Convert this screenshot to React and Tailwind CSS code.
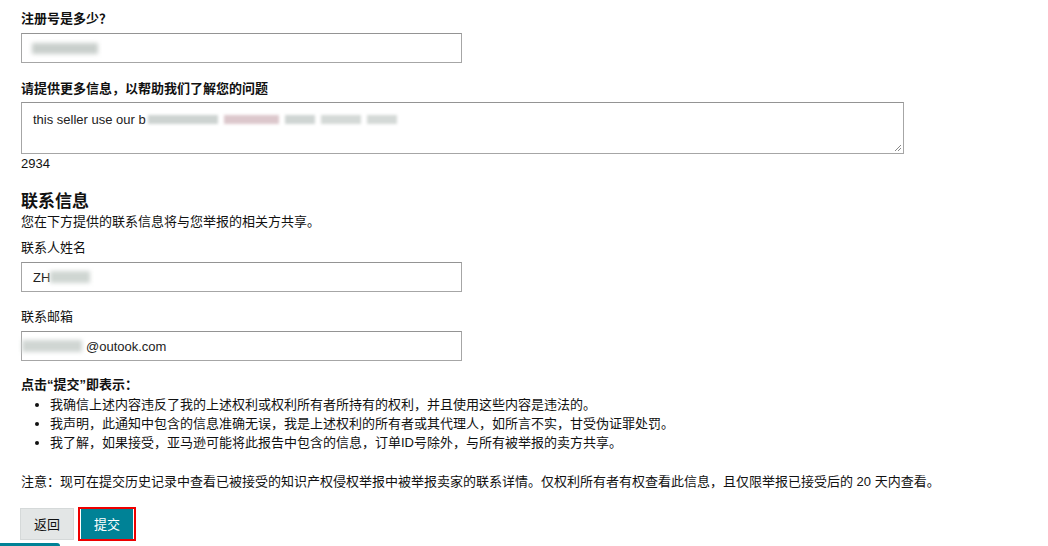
export default function App() {
  const font = { fontFamily: '"Liberation Sans", "Noto Sans CJK SC", sans-serif' };
  return (
    <div className="w-[1048px] h-[546px] bg-white relative overflow-hidden text-[13px] text-[#111] leading-[19px]" style={font}>
      <div className="pl-[21px] pt-[9px]">
        <div className="font-bold h-[19px]">注册号是多少？</div>
        <div className="mt-[5px] w-[441px] h-[30px] border border-[#a6a6a6] border-t-[#949494] flex items-center pl-[10px]">
          <div className="w-[66px] h-[11px] bg-[#c9cfcc] blur-[2px]"></div>
        </div>

        <div className="font-bold mt-[16px] h-[19px]">请提供更多信息，以帮助我们了解您的问题</div>
        <div className="mt-[4px] w-[883px] h-[52px] border border-[#a6a6a6] border-t-[#949494] relative pl-[11px] pt-[7px]">
          <div className="flex items-center">
            <span className="text-[#222]">this seller use our b</span>
            <div className="flex items-center gap-[6px] ml-[2px] blur-[1.5px]">
              <div className="w-[70px] h-[9px] bg-[#cdd3d1]"></div>
              <div className="w-[55px] h-[9px] bg-[#dcc7cc]"></div>
              <div className="w-[30px] h-[9px] bg-[#cfd5d3]"></div>
              <div className="w-[40px] h-[9px] bg-[#d4d9d7]"></div>
              <div className="w-[30px] h-[9px] bg-[#d4d9d7]"></div>
            </div>
          </div>
          <svg className="absolute right-[1px] bottom-[1px]" width="9" height="9" viewBox="0 0 9 9">
            <path d="M8 2L2 8M8 5L5 8" stroke="#888" strokeWidth="1" />
          </svg>
        </div>
        <div className="h-[19px]">2934</div>

        <div className="font-bold text-[17px] leading-[20px] mt-[19px]">联系信息</div>
        <div className="h-[19px]">您在下方提供的联系信息将与您举报的相关方共享。</div>

        <div className="mt-[7px] h-[19px]">联系人姓名</div>
        <div className="mt-[5px] w-[441px] h-[30px] border border-[#a6a6a6] border-t-[#949494] flex items-center pl-[11px]">
          <span className="text-[#222]">ZH</span>
          <div className="w-[40px] h-[12px] bg-[#cfd6d2] blur-[2px]"></div>
        </div>

        <div className="mt-[15px] h-[19px]">联系邮箱</div>
        <div className="mt-[5px] w-[441px] h-[30px] border border-[#a6a6a6] border-t-[#949494] flex items-center">
          <div className="w-[60px] h-[12px] bg-[#d0d6d3] blur-[2px]"></div>
          <span className="text-[#222] ml-[4px]">@outook.com</span>
        </div>

        <div className="font-bold mt-[14px] h-[19px]">点击“提交”即表示：</div>
        <ul className="list-disc pl-[29px] mt-[1px]">
          <li className="h-[19px]">我确信上述内容违反了我的上述权利或权利所有者所持有的权利，并且使用这些内容是违法的。</li>
          <li className="h-[19px]">我声明，此通知中包含的信息准确无误，我是上述权利的所有者或其代理人，如所言不实，甘受伪证罪处罚。</li>
          <li className="h-[19px]">我了解，如果接受，亚马逊可能将此报告中包含的信息，订单ID号除外，与所有被举报的卖方共享。</li>
        </ul>

        <div className="mt-[20px] h-[19px]">注意：现可在提交历史记录中查看已被接受的知识产权侵权举报中被举报卖家的联系详情。仅权利所有者有权查看此信息，且仅限举报已接受后的 20 天内查看。</div>

        <div className="flex items-center gap-[4px] mt-[16px] -ml-[1px]">
          <div className="w-[54px] h-[32px] bg-[#e3e6e6] border border-[#d5d9d9] flex items-center justify-center text-[#111]">返回</div>
          <div className="w-[58px] h-[34px] border-[2px] border-[#e00] flex items-center justify-center">
            <div className="w-[52px] h-[30px] bg-[#008296] text-white flex items-center justify-center">提交</div>
          </div>
        </div>
      </div>
      <div className="absolute left-0 bottom-0 w-[60px] h-[3px] bg-[#008296] rounded-tr-[3px]"></div>
    </div>
  );
}
